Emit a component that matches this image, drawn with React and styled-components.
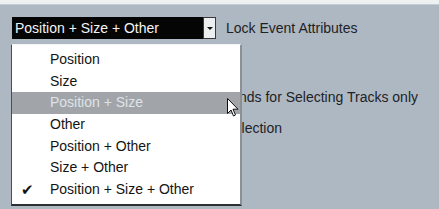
import React from "react";
import styled, { createGlobalStyle } from "styled-components";

const GlobalStyle = createGlobalStyle`
  body {
    margin: 0;
    background: #aeb8c2;
    font-family: "Liberation Sans", Arial, sans-serif;
  }
`;

const Screen = styled.div`
  position: relative;
  width: 439px;
  height: 209px;
  overflow: hidden;
  background: #aeb8c2;
  display: flex;
  flex-direction: column;
`;

const TopStrip = styled.div`
  height: 4px;
  background: #eef0f2;
  border-bottom: 1px solid #c4ccd4;
`;

const Panel = styled.div`
  flex: 1;
  padding: 12px 0 0 12px;
  display: flex;
  flex-direction: column;
`;

const SelectRow = styled.div`
  display: flex;
  align-items: center;
  height: 22px;
`;

const SelectBox = styled.div`
  width: 191px;
  height: 22px;
  box-sizing: border-box;
  background: #050505;
  color: #f4f4f4;
  font-size: 14px;
  line-height: 22px;
  padding-left: 3px;
  white-space: nowrap;
`;

const ArrowButton = styled.div`
  width: 13px;
  height: 22px;
  box-sizing: border-box;
  border: 1px solid #3a3a3a;
  background: #eceeef;
  display: flex;
  align-items: center;
  justify-content: center;

  &::after {
    content: "";
    border-left: 3px solid transparent;
    border-right: 3px solid transparent;
    border-top: 3px solid #111;
  }
`;

const Label = styled.span`
  margin-left: 10px;
  font-size: 14px;
  color: #1e2226;
  white-space: nowrap;
`;

// option rows partly hidden under the open menu: only the visible tail is drawn
const OptionLine = styled.div`
  margin-left: 230px;
  width: ${(p) => p.$width}px;
  margin-top: ${(p) => p.$top}px;
  font-size: 14px;
  line-height: 18px;
  color: #1e2226;
  white-space: nowrap;
  overflow: hidden;
  direction: rtl;
  text-align: left;
`;

const Menu = styled.ul`
  position: absolute;
  left: 11px;
  top: 44px;
  width: 231px;
  height: 162px;
  box-sizing: border-box;
  margin: 0;
  padding: 4px 0 0 0;
  list-style: none;
  background: #ffffff;
  border-left: 1px solid #4a4d52;
  border-right: 2px solid #8a9096;
  border-bottom: 2px solid #2c2e31;
  border-top: 1px solid #f4f4f4;
`;

const Item = styled.li`
  position: relative;
  height: 21.67px;
  line-height: 21.67px;
  padding-left: 38px;
  font-size: 14px;
  color: ${(p) => (p.$active ? "#dfe3e7" : "#141414")};
  background: ${(p) => (p.$active ? "#a1a5aa" : "transparent")};
  white-space: nowrap;
`;

const Check = styled.span`
  position: absolute;
  left: 9px;
  top: 0;
  font-size: 15px;
  color: #111;
`;

const Cursor = styled.svg`
  position: absolute;
  left: 227px;
  top: 98px;
`;

const items = [
  "Position",
  "Size",
  "Position + Size",
  "Other",
  "Position + Other",
  "Size + Other",
  "Position + Size + Other",
];

export default function App() {
  return (
    <>
      <GlobalStyle />
      <Screen>
        <TopStrip />
        <Panel>
          <SelectRow>
            <SelectBox>Position + Size + Other</SelectBox>
            <ArrowButton />
            <Label>Lock Event Attributes</Label>
          </SelectRow>
          <OptionLine $width={176} $top={49}>
            Use Up/Down Navigation Commands for Selecting Tracks only
          </OptionLine>
          <OptionLine $width={40} $top={13}>
            Track Selection Follows Event Selection
          </OptionLine>
        </Panel>
        <Menu>
          {items.map((it, i) => (
            <Item key={it} $active={i === 2}>
              {i === 6 && <Check>✔</Check>}
              {it}
            </Item>
          ))}
        </Menu>
        <Cursor width="12" height="19" viewBox="0 0 12 19">
          <path
            d="M0.5 0.5 L0.5 15.5 L4 12 L6.5 18 L8.5 17 L6 11.2 L11 11.2 Z"
            fill="#fff"
            stroke="#111"
            strokeWidth="1"
            strokeLinejoin="round"
          />
        </Cursor>
      </Screen>
    </>
  );
}
